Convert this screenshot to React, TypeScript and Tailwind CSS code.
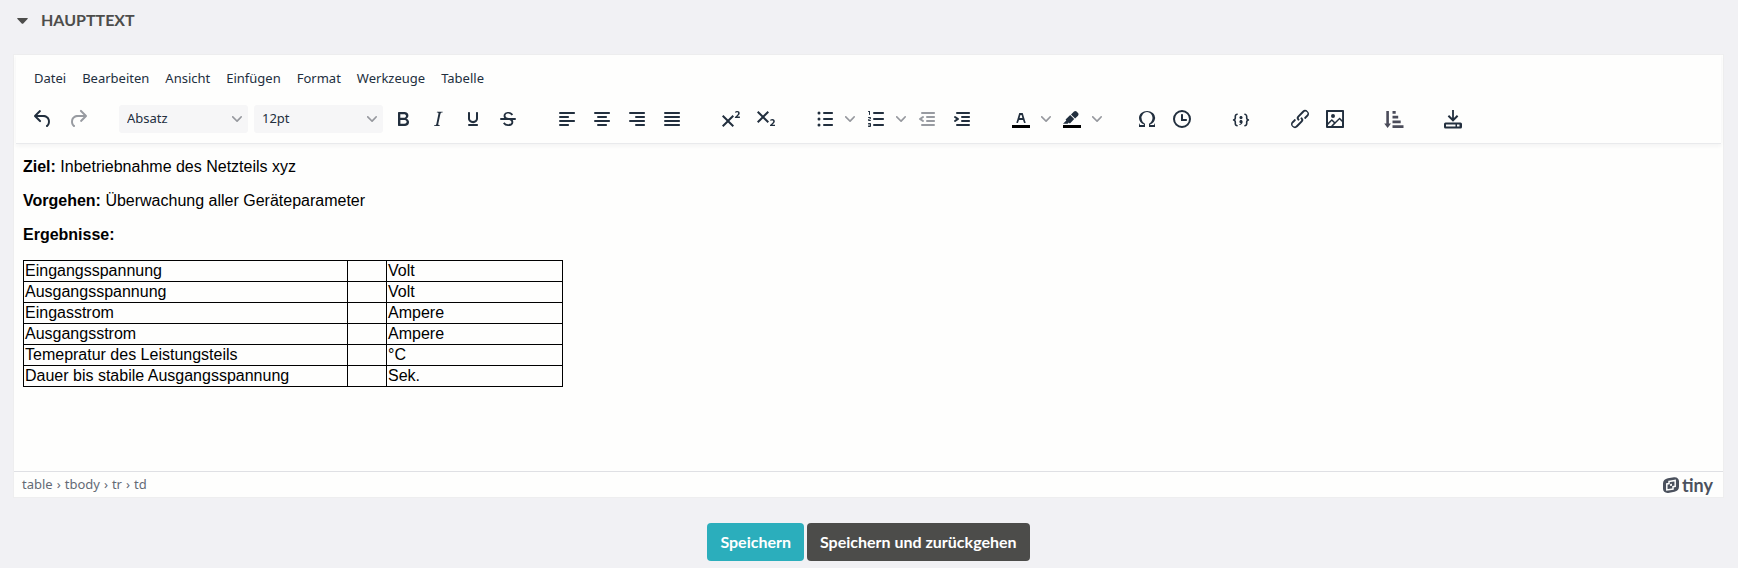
import type { ReactNode } from "react";

const ICONS = {
  undo: "M6.4 8H12c3.7 0 6.2 2 6.8 5.1.6 2.7-.4 5.6-2.3 6.8a1 1 0 0 1-1-1.8c1.1-.6 1.8-2.7 1.4-4.6-.5-2.1-2.1-3.5-4.9-3.5H6.4l3.3 3.3a1 1 0 1 1-1.4 1.4l-5-5a1 1 0 0 1 0-1.4l5-5a1 1 0 0 1 1.4 1.4L6.4 8Z",
  redo: "M17.6 10H12c-2.8 0-4.4 1.4-4.9 3.5-.4 2 .3 4 1.4 4.6a1 1 0 1 1-1 1.8c-2-1.2-2.9-4.1-2.3-6.8.6-3 3-5.1 6.8-5.1h5.6l-3.3-3.3a1 1 0 1 1 1.4-1.4l5 5a1 1 0 0 1 0 1.4l-5 5a1 1 0 0 1-1.4-1.4l3.3-3.3Z",
  bold: "M7.8 19c-.3 0-.5 0-.6-.2l-.2-.5V5.7c0-.2 0-.4.2-.5l.6-.2h5c1.5 0 2.7.3 3.5 1 .7.6 1.1 1.4 1.1 2.5a3 3 0 0 1-.6 1.9c-.4.6-1 1-1.6 1.2.4.1.9.3 1.3.6s.8.7 1 1.2c.4.4.5 1 .5 1.6 0 1.3-.4 2.3-1.3 3-.8.7-2.1 1-3.8 1H7.8Zm5-8.3c.6 0 1.2-.1 1.6-.5.4-.3.6-.7.6-1.3 0-1.1-.8-1.7-2.3-1.7H9.3v3.5h3.4Zm.5 6c.7 0 1.3-.1 1.7-.4.4-.4.6-.9.6-1.5s-.2-1-.7-1.4c-.4-.3-1-.4-2-.4H9.4v3.8h4Z",
  italic: "m16.7 4.7-.1.9h-.3c-.6 0-1 0-1.4.3-.3.3-.4.6-.5 1.1l-2.1 9.8v.6c0 .5.4.8 1.4.8h.2l-.2.8H8l.2-.8h.2c1.1 0 1.8-.5 2-1.5l2-9.8.1-.5c0-.6-.4-.8-1.4-.8h-.3l.2-.9h5.8Z",
  underline: "M16 5c.6 0 1 .4 1 1v5.5a4 4 0 0 1-.4 1.8l-1 1.4a5.3 5.3 0 0 1-5.5 1 5 5 0 0 1-1.6-1c-.5-.4-.8-.9-1.1-1.4a4 4 0 0 1-.4-1.8V6c0-.6.4-1 1-1s1 .4 1 1v5.5c0 .3 0 .6.2 1l.6.7a3.3 3.3 0 0 0 2.2.8 3.4 3.4 0 0 0 2.2-.8c.3-.2.4-.5.6-.8l.2-.9V6c0-.6.4-1 1-1ZM8 17h8c.6 0 1 .4 1 1s-.4 1-1 1H8a1 1 0 0 1 0-2Z",
  strike: "M15.6 8.5c-.5-.7-1-1.1-1.3-1.3-.6-.4-1.3-.6-2-.6-2.7 0-2.8 1.7-2.8 2.1 0 1.6 1.8 2 3.2 2.3 4.4.9 4.6 2.8 4.6 3.9 0 1.4-.7 4.1-5 4.1A6.2 6.2 0 0 1 7 16.4l1.5-1.1c.4.6 1.6 2 3.7 2 1.6 0 2.5-.4 3-1.2.4-.8.3-2-.8-2.6-.7-.4-1.6-.7-2.9-1-1-.2-3.9-.8-3.9-3.6C7.6 6 10.3 5 12.4 5c2.9 0 4.2 1.6 4.7 2.4l-1.5 1.1Z",
  alignLeft: "M5 5h14c.6 0 1 .4 1 1s-.4 1-1 1H5a1 1 0 1 1 0-2Zm0 4h8c.6 0 1 .4 1 1s-.4 1-1 1H5a1 1 0 1 1 0-2Zm0 8h8c.6 0 1 .4 1 1s-.4 1-1 1H5a1 1 0 0 1 0-2Zm0-4h14c.6 0 1 .4 1 1s-.4 1-1 1H5a1 1 0 0 1 0-2Z",
  alignCenter: "M5 5h14c.6 0 1 .4 1 1s-.4 1-1 1H5a1 1 0 1 1 0-2Zm3 4h8c.6 0 1 .4 1 1s-.4 1-1 1H8a1 1 0 1 1 0-2Zm0 8h8c.6 0 1 .4 1 1s-.4 1-1 1H8a1 1 0 0 1 0-2Zm-3-4h14c.6 0 1 .4 1 1s-.4 1-1 1H5a1 1 0 0 1 0-2Z",
  alignRight: "M5 5h14c.6 0 1 .4 1 1s-.4 1-1 1H5a1 1 0 1 1 0-2Zm6 4h8c.6 0 1 .4 1 1s-.4 1-1 1h-8a1 1 0 0 1 0-2Zm0 8h8c.6 0 1 .4 1 1s-.4 1-1 1h-8a1 1 0 0 1 0-2Zm-6-4h14c.6 0 1 .4 1 1s-.4 1-1 1H5a1 1 0 0 1 0-2Z",
  justify: "M5 5h14c.6 0 1 .4 1 1s-.4 1-1 1H5a1 1 0 1 1 0-2Zm0 4h14c.6 0 1 .4 1 1s-.4 1-1 1H5a1 1 0 1 1 0-2Zm0 4h14c.6 0 1 .4 1 1s-.4 1-1 1H5a1 1 0 0 1 0-2Zm0 4h14c.6 0 1 .4 1 1s-.4 1-1 1H5a1 1 0 0 1 0-2Z",
  superscript: "M15 9.4 10.4 14l4.6 4.6-1.4 1.4L9 15.4 4.4 20 3 18.6 7.6 14 3 9.4 4.4 8 9 12.6 13.6 8 15 9.4Zm5.9 1.6h-5v-1l1-.8 1.7-1.6c.3-.5.5-.9.5-1.3 0-.3 0-.5-.2-.7-.2-.2-.5-.3-.9-.3l-.8.2-.7.4-.4-1.2c.2-.2.5-.4 1-.5.3-.2.8-.2 1.2-.2.8 0 1.4.2 1.8.6.4.4.6 1 .6 1.6 0 .5-.2 1-.5 1.5l-1.3 1.4-.6.5h2.6V11Z",
  subscript: "m10.4 10 4.6 4.6-1.4 1.4L9 11.4 4.4 16 3 14.6 7.6 10 3 5.4 4.4 4 9 8.6 13.6 4 15 5.4 10.4 10ZM21 19h-5v-1l1-.8 1.7-1.6c.3-.4.5-.8.5-1.2 0-.3 0-.6-.2-.7-.2-.2-.5-.3-.9-.3a2 2 0 0 0-.8.2l-.7.3-.4-1.1 1-.6 1.2-.2c.8 0 1.4.3 1.8.7.4.4.6.9.6 1.5s-.2 1.1-.5 1.6a8 8 0 0 1-1.3 1.3l-.6.6h2.6V19Z",
  bullets: "M11 5h8c.6 0 1 .4 1 1s-.4 1-1 1h-8a1 1 0 0 1 0-2Zm0 6h8c.6 0 1 .4 1 1s-.4 1-1 1h-8a1 1 0 0 1 0-2Zm0 6h8c.6 0 1 .4 1 1s-.4 1-1 1h-8a1 1 0 0 1 0-2ZM6 4.5a1.5 1.5 0 1 1 0 3 1.5 1.5 0 0 1 0-3Zm0 6a1.5 1.5 0 1 1 0 3 1.5 1.5 0 0 1 0-3Zm0 6a1.5 1.5 0 1 1 0 3 1.5 1.5 0 0 1 0-3Z",
  numbers: "M10 17h9c.6 0 1 .4 1 1s-.4 1-1 1h-9a1 1 0 0 1 0-2Zm0-6h9c.6 0 1 .4 1 1s-.4 1-1 1h-9a1 1 0 0 1 0-2Zm0-6h9c.6 0 1 .4 1 1s-.4 1-1 1h-9a1 1 0 1 1 0-2ZM6 4v3.5c0 .3-.2.5-.5.5a.5.5 0 0 1-.5-.5V5h-.5a.5.5 0 0 1 0-1H6Zm-1 8.8.2.2h1.3c.3 0 .5.2.5.5s-.2.5-.5.5H4.9a1 1 0 0 1-.9-1V13c0-.4.3-.8.6-1l1.2-.4.2-.3a.2.2 0 0 0-.2-.2H4.5a.5.5 0 0 1-.5-.5c0-.3.2-.5.5-.5h1.6c.5 0 .9.4.9 1v.1c0 .4-.3.8-.6 1l-1.2.4-.2.3ZM7 17v2c0 .6-.4 1-1 1H4.5a.5.5 0 0 1 0-1h1.2c.2 0 .3-.1.3-.3 0-.2-.1-.3-.3-.3H4.4a.4.4 0 1 1 0-.8h1.3c.2 0 .3-.1.3-.3 0-.2-.1-.3-.3-.3H4.5a.5.5 0 1 1 0-1H6c.6 0 1 .4 1 1Z",
  outdent: "M7 5h12c.6 0 1 .4 1 1s-.4 1-1 1H7a1 1 0 1 1 0-2Zm5 4h7c.6 0 1 .4 1 1s-.4 1-1 1h-7a1 1 0 0 1 0-2Zm0 4h7c.6 0 1 .4 1 1s-.4 1-1 1h-7a1 1 0 0 1 0-2Zm-5 4h12a1 1 0 0 1 0 2H7a1 1 0 0 1 0-2Zm1.6-3.8a1 1 0 0 1-1.2 1.6l-3-2a1 1 0 0 1 0-1.6l3-2a1 1 0 0 1 1.2 1.6L6.8 12l1.8 1.2Z",
  indent: "M7 5h12c.6 0 1 .4 1 1s-.4 1-1 1H7a1 1 0 1 1 0-2Zm5 4h7c.6 0 1 .4 1 1s-.4 1-1 1h-7a1 1 0 0 1 0-2Zm0 4h7c.6 0 1 .4 1 1s-.4 1-1 1h-7a1 1 0 0 1 0-2Zm-5 4h12a1 1 0 0 1 0 2H7a1 1 0 0 1 0-2Zm-2.6-3.8L6.2 12l-1.8-1.2a1 1 0 0 1 1.2-1.6l3 2a1 1 0 0 1 0 1.6l-3 2a1 1 0 1 1-1.2-1.6Z",
  textColor: "M8.7 16h-.8a.5.5 0 0 1-.5-.6l2.7-9c.1-.3.3-.4.5-.4h2.8c.2 0 .4.1.5.4l2.7 9a.5.5 0 0 1-.5.6h-.8a.5.5 0 0 1-.4-.4l-.7-2.2c0-.3-.3-.4-.5-.4h-3.4c-.2 0-.4.1-.5.4l-.7 2.2c0 .3-.2.4-.4.4Zm2.6-7.6-.6 2a.5.5 0 0 0 .5.6h1.6a.5.5 0 0 0 .5-.6l-.6-2c0-.3-.3-.4-.5-.4h-.4c-.2 0-.4.1-.5.4Z",
  highlight: "M7.7 16.7H3l3.3-3.3-.7-.8L10.2 8l4 4.1-4 4.2c-.2.2-.6.2-.8 0l-.6-.7-1.1 1.1Zm5-7.5L11 7.4l3-2.9a2 2 0 0 1 2.6 0L18 6c.7.7.7 2 0 2.7l-2.9 2.9-1.8-1.8-.6-.6Z",
  omega: "M15 18h4l1-2v4h-6v-3.3l1.4-1a6 6 0 0 0 1.8-2.9 6.3 6.3 0 0 0-.1-4.1 5.8 5.8 0 0 0-3-3.2c-.6-.3-1.3-.5-2.1-.5a5.1 5.1 0 0 0-3.9 1.8 6.3 6.3 0 0 0-1.3 6 6.2 6.2 0 0 0 1.8 3l1.4.9V20H4v-4l1 2h4v-.5l-2-1L5.4 15A6.5 6.5 0 0 1 4 11c0-1 .2-1.900.6-2.700A7 7 0 0 1 6.300 6C7.100 5.400 8 5 9 4.500c1-.3 2-.5 3.100-.5a8.800 8.800 0 0 1 5.700 2 7 7 0 0 1 1.700 2.300 6 6 0 0 1 .2 4.800c-.2.7-.6 1.300-1 1.900a7.600 7.600 0 0 1-3.600 2.500v.5Z",
  clock: "M12 19a7 7 0 1 0 0-14 7 7 0 0 0 0 14Zm0 2a9 9 0 1 1 0-18 9 9 0 0 1 0 18Zm4-9h-3V8c0-.6-.4-1-1-1s-1 .4-1 1v6h5c.6 0 1-.4 1-1s-.4-1-1-1Z",
  code: "M7.1 11a2.8 2.8 0 0 1-.8 2 2.8 2.8 0 0 1 .8 2v1.7c0 .3.1.6.4.8.2.3.5.4.8.4.3 0 .4.2.4.4v.8c0 .2-.1.4-.4.4-.7 0-1.4-.3-2-.8-.5-.6-.8-1.3-.8-2V15c0-.3-.1-.6-.4-.8-.2-.3-.5-.4-.8-.4a.4.4 0 0 1-.4-.4v-.8c0-.2.2-.4.4-.4.3 0 .6-.1.8-.4.3-.2.4-.5.4-.8V9.3c0-.7.3-1.4.8-2 .6-.5 1.3-.8 2-.8.3 0 .4.2.4.4v.8c0 .2-.1.4-.4.4-.3 0-.6.1-.8.4-.3.2-.4.5-.4.8V11Zm9.8 0V9.3c0-.3-.1-.6-.4-.8-.2-.3-.5-.4-.8-.4a.4.4 0 0 1-.4-.4V7c0-.2.1-.4.4-.4.7 0 1.4.3 2 .8.5.6.8 1.3.8 2V11c0 .3.1.6.4.8.2.3.5.4.8.4.2 0 .4.2.4.4v.8c0 .2-.2.4-.4.4-.3 0-.6.1-.8.4-.3.2-.4.5-.4.8v1.7c0 .7-.3 1.4-.8 2-.6.5-1.3.8-2 .8a.4.4 0 0 1-.4-.4v-.8c0-.2.1-.4.4-.4.3 0 .6-.1.8-.4.3-.2.4-.5.4-.8V15a2.8 2.8 0 0 1 .8-2 2.8 2.8 0 0 1-.8-2Zm-3.3-.4c0 .4-.1.8-.5 1.1-.3.3-.7.5-1.1.5-.4 0-.8-.2-1.1-.5-.4-.3-.5-.7-.5-1.1 0-.5.1-.9.5-1.2.3-.3.7-.4 1.1-.4.4 0 .8.1 1.1.4.4.3.5.7.5 1.2ZM12 13c.4 0 .8.1 1.1.5.4.3.5.7.5 1.1 0 1-.1 1.6-.5 2a3 3 0 0 1-1.1 1c-.4.3-.8.4-1.1.4a.5.5 0 0 1-.5-.5V17a3 3 0 0 0 1-.2l.6-.6c-.6 0-1-.2-1.3-.5-.2-.3-.3-.7-.3-1 0-.5.1-1 .5-1.2.3-.4.7-.5 1.1-.5Z",
  link: "M6.2 12.3a1 1 0 0 1 1.4 1.4l-2 2a2 2 0 1 0 2.6 2.8l4.8-4.8a1 1 0 0 0 0-1.4 1 1 0 1 1 1.4-1.3 2.9 2.9 0 0 1 0 4L9.6 20a3.9 3.9 0 0 1-5.5-5.5l2-2Zm11.6-.6a1 1 0 0 1-1.4-1.4l2-2a2 2 0 1 0-2.6-2.8L11 10.3a1 1 0 0 0 0 1.4A1 1 0 1 1 9.6 13a2.9 2.9 0 0 1 0-4L14.4 4a3.9 3.9 0 0 1 5.5 5.5l-2 2Z",
  image: "m5 15.7 3.3-3.2c.3-.3.7-.3 1 0L12 15l4.1-4c.3-.4.8-.4 1 0l2 1.9V5H5v10.7ZM5 18V19h3l2.8-2.9-2-2L5 17.9Zm14-3-2.5-2.4-6.4 6.5H19v-4ZM4 3h16c.6 0 1 .4 1 1v16c0 .6-.4 1-1 1H4a1 1 0 0 1-1-1V4c0-.6.4-1 1-1Zm6 8a2 2 0 1 0 0-4 2 2 0 0 0 0 4Z",
  sort: "M4.300 4h2.600v12.500H9L5.600 21 2.200 16.500h2.100V4ZM10.500 4h3.200v2.800h-3.200V4Zm0 4.700h5.700v2.700h-5.700V8.700Zm0 4.800h8.200v2.700h-8.200v-2.700Zm0 4.700H21.500V21h-11v-2.800Z",
  save: "M12.900 3v8.100l3-3 1.400 1.400L12 14.700 6.700 9.500l1.400-1.400 3 3V3h1.800ZM4.500 15.500h15A1.500 1.500 0 0 1 21 17v3a1.500 1.500 0 0 1-1.500 1.500h-15A1.500 1.500 0 0 1 3 20v-3a1.500 1.500 0 0 1 1.500-1.500Zm.5 2v2h9.500v-2H5Zm11 0v2h2.500v-2H16Z",
};

type IconName = keyof typeof ICONS;

function Icon({ name, bar = false }: { name: IconName; bar?: boolean }) {
  return (
    <svg viewBox="0 0 24 24" className="size-6 shrink-0" fill="currentColor" fillRule="evenodd" aria-hidden="true">
      <path d={ICONS[name]} />
      {name === "strike" && <path d="M5 11h14a1 1 0 0 1 0 2H5a1 1 0 0 1 0-2Z" />}
      {bar && <path d="M3 18h18v3H3z" fill="#000" />}
    </svg>
  );
}

function Chevron() {
  return (
    <svg viewBox="0 0 10 10" className="size-2.5 shrink-0 text-[#96989e]" fill="currentColor" aria-hidden="true">
      <path d="M8.7 2.2c.3-.3.8-.3 1 0 .4.4.4.9 0 1.200L5.700 7.800c-.3.3-.9.3-1.200 0L.2 3.400a.8.8 0 0 1 0-1.200c.3-.3.8-.3 1.100 0L5 6l3.700-3.800Z" />
    </svg>
  );
}

function Tool({ name, label, disabled = false }: { name: IconName; label: string; disabled?: boolean }) {
  return (
    <button
      type="button"
      aria-label={label}
      disabled={disabled}
      className="flex h-7 w-[35px] items-center justify-center disabled:text-[#989ba1]"
    >
      <Icon name={name} />
    </button>
  );
}

function SplitTool({ name, label, bar = false }: { name: IconName; label: string; bar?: boolean }) {
  return (
    <div className="flex">
      <button type="button" aria-label={label} className="flex h-7 w-[35px] items-center justify-center">
        <Icon name={name} bar={bar} />
      </button>
      <button type="button" aria-label={`${label} Optionen`} className="flex h-7 w-4 items-center justify-center">
        <Chevron />
      </button>
    </div>
  );
}

function Group({ children }: { children: ReactNode }) {
  return <div className="flex items-center">{children}</div>;
}

function ToolSelect({ label, value }: { label: string; value: string }) {
  return (
    <div className="relative flex w-[129px] items-center">
      <select
        aria-label={label}
        className="h-7 w-full appearance-none rounded-[3px] bg-[#f6f6f7] pl-2 pr-6 text-[13px]"
        defaultValue={value}
      >
        <option>{value}</option>
      </select>
      <span className="pointer-events-none absolute right-1.5">
        <Chevron />
      </span>
    </div>
  );
}

const MENU = ["Datei", "Bearbeiten", "Ansicht", "Einfügen", "Format", "Werkzeuge", "Tabelle"];

const PATH = ["table", "›", "tbody", "›", "tr", "›", "td"];

const ROWS = [
  ["Eingangsspannung", "Volt"],
  ["Ausgangsspannung", "Volt"],
  ["Eingasstrom", "Ampere"],
  ["Ausgangsstrom", "Ampere"],
  ["Temepratur des Leistungsteils", "°C"],
  ["Dauer bis stabile Ausgangsspannung", "Sek."],
];

export default function App() {
  return (
    <main className="min-h-screen bg-[#f1f1f4] pr-3.5 pl-[13px] font-['Noto_Sans',sans-serif]">
      <h2 className="font-[Lato,sans-serif] text-base font-bold text-[#4d4d4b]">
        <button type="button" aria-expanded="true" className="flex h-[54px] items-start gap-[13px] pt-2 pl-1">
          <svg viewBox="0 0 11 24" className="h-6 w-[11px]" fill="currentColor" aria-hidden="true">
            <path d="M1 10h9c.8 0 1 .6.5 1.100L6.300 15.400a1.100 1.100 0 0 1-1.600 0L.5 11.100C0 10.600.2 10 1 10Z" />
          </svg>
          HAUPTTEXT
        </button>
      </h2>

      <section className="border border-[#eeeeef] bg-[#fefefd] text-[#222f3e]">
        <div className="px-0.5">
          <div className="border-b border-[#e9eaec] shadow-[0_2px_4px_rgba(34,47,62,0.05)]">
            <nav className="flex h-11 items-center px-[10px] pt-1 text-[13px]">
              {MENU.map((item) => (
                <button key={item} type="button" className="px-2">
                  {item}
                </button>
              ))}
            </nav>
            <div className="flex h-11 items-center gap-6 px-[9px] pb-1">
              <Group>
                <Tool name="undo" label="Rückgängig" />
                <Tool name="redo" label="Wiederholen" disabled />
              </Group>
              <div className="flex items-center">
                <div className="mr-0.5 flex gap-1.5">
                  <ToolSelect label="Blockformat" value="Absatz" />
                  <ToolSelect label="Schriftgröße" value="12pt" />
                </div>
                <Tool name="bold" label="Fett" />
                <Tool name="italic" label="Kursiv" />
                <Tool name="underline" label="Unterstrichen" />
                <Tool name="strike" label="Durchgestrichen" />
              </div>
              <Group>
                <Tool name="alignLeft" label="Linksbündig" />
                <Tool name="alignCenter" label="Zentriert" />
                <Tool name="alignRight" label="Rechtsbündig" />
                <Tool name="justify" label="Blocksatz" />
              </Group>
              <Group>
                <Tool name="superscript" label="Hochgestellt" />
                <Tool name="subscript" label="Tiefgestellt" />
              </Group>
              <Group>
                <SplitTool name="bullets" label="Aufzählung" />
                <SplitTool name="numbers" label="Nummerierte Liste" />
                <Tool name="outdent" label="Einzug verkleinern" disabled />
                <Tool name="indent" label="Einzug vergrößern" />
              </Group>
              <Group>
                <SplitTool name="textColor" label="Textfarbe" bar />
                <SplitTool name="highlight" label="Hintergrundfarbe" bar />
              </Group>
              <Group>
                <Tool name="omega" label="Sonderzeichen" />
                <Tool name="clock" label="Datum und Uhrzeit" />
              </Group>
              <Tool name="code" label="Codebeispiel" />
              <Group>
                <Tool name="link" label="Link" />
                <Tool name="image" label="Bild" />
              </Group>
              <div className="flex text-[#4b4c5a]">
                <Tool name="sort" label="Sortieren" />
              </div>
              <Tool name="save" label="Herunterladen" />
            </div>
          </div>
        </div>

        <div className="min-h-[327px] px-[9px] pt-[14px] font-['Liberation_Sans',Arial,sans-serif] text-base leading-[18px] text-black">
          <p className="mb-4">
            <strong>Ziel:</strong> Inbetriebnahme des Netzteils xyz
          </p>
          <p className="mb-4">
            <strong>Vorgehen:</strong> Überwachung aller Geräteparameter
          </p>
          <p className="mb-4">
            <strong>Ergebnisse:</strong>
          </p>
          <table className="w-[540px] table-fixed border-collapse">
            <colgroup>
              <col className="w-[324px]" />
              <col className="w-[39px]" />
              <col />
            </colgroup>
            <tbody>
              {ROWS.map(([name, unit]) => (
                <tr key={name} className="h-[21px]">
                  <td className="border border-black px-px">{name}</td>
                  <td className="border border-black" />
                  <td className="border border-black px-px">{unit}</td>
                </tr>
              ))}
            </tbody>
          </table>
        </div>

        <footer className="flex h-[26px] items-center justify-between border-t border-[#dfe0e4] pr-2.5 pl-2 text-[13px] text-[#646a75]">
          <div className="flex gap-1">
            {PATH.map((part, i) => (
              <span key={i}>{part}</span>
            ))}
          </div>
          <a href="#tiny" className="flex items-center gap-[3px] font-[Lato,sans-serif] text-lg leading-6 font-bold text-[#4b515d]">
            <svg viewBox="0 0 16 16" className="size-4" aria-hidden="true">
              <path
                fill="currentColor"
                d="M4.900 1.300 11 .2C14 -.1 16 1.600 16 4.300v5.200c0 2.900-1.600 4.700-4.500 5.300L5.200 15.900C2.200 16.200 0 14.500 0 11.800V6.500c0-2.900 1.900-4.600 4.900-5.200Z"
              />
              <path
                fill="none"
                stroke="#fefefd"
                strokeWidth="1.500"
                d="M6 4.400 12.200 3.400V9.300L10 9.700V12L3.800 12.900V7L6 6.600Z"
              />
              <path fill="#fefefd" d="M7.100 7.100 9 6.800v1.900l-1.900.3Z" />
            </svg>
            tiny
          </a>
        </footer>
      </section>

      <div className="flex justify-center gap-[3px] pt-[25px] font-[Lato,sans-serif] text-base leading-[22px] font-bold text-white">
        <button type="button" className="rounded bg-[#2baebc] px-[13px] py-2">
          Speichern
        </button>
        <button type="button" className="rounded bg-[#4c4c4a] px-[13px] py-2">
          Speichern und zurückgehen
        </button>
      </div>
    </main>
  );
}
